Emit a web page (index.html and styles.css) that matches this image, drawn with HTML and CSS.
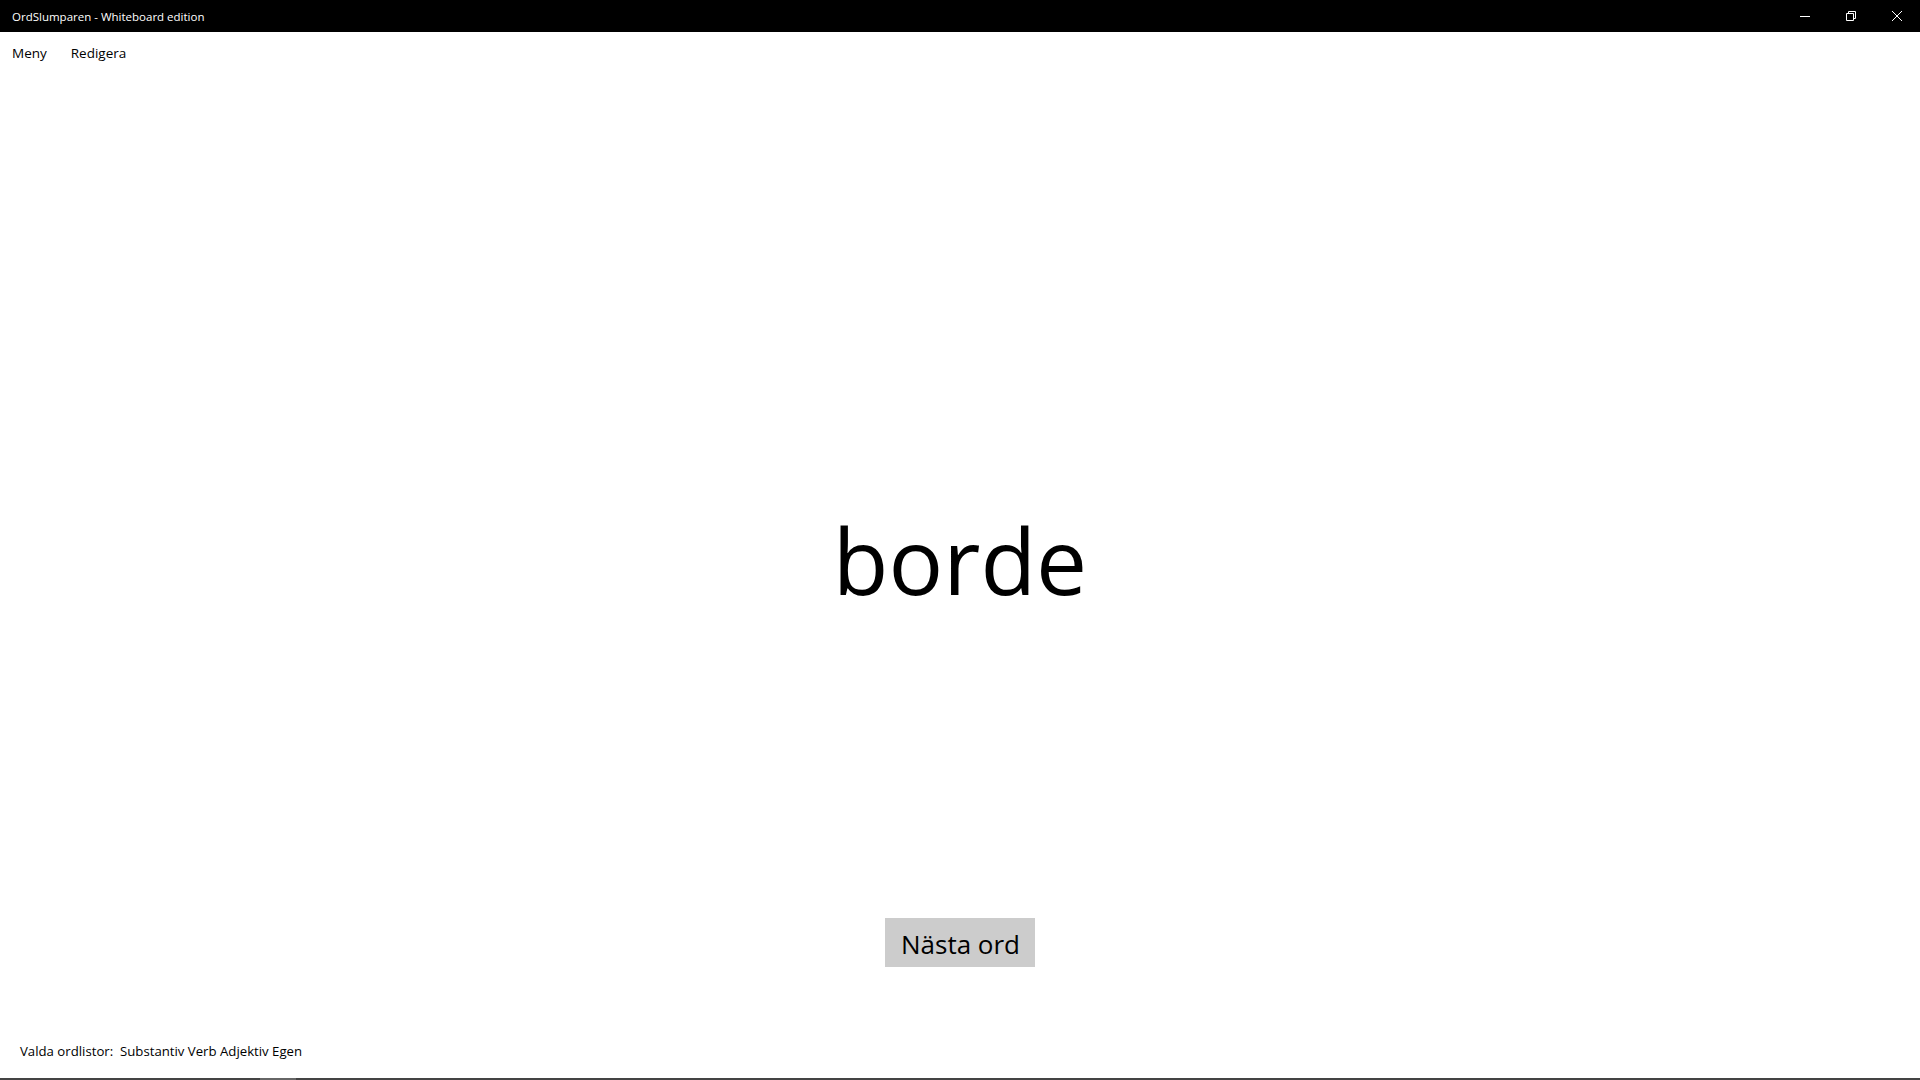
FILE: index.html
```html
<!DOCTYPE html>
<html lang="sv">
<head>
<meta charset="utf-8">
<title>OrdSlumparen - Whiteboard edition</title>
<link rel="stylesheet" href="styles.css">
</head>
<body>
<div class="window">
  <header class="titlebar">
    <span class="title">OrdSlumparen - Whiteboard edition</span>
    <div class="controls">
      <span class="ctl"><svg width="10" height="10" viewBox="0 0 10 10"><path d="M0 5.5H10" stroke="#fff" stroke-width="1"/></svg></span>
      <span class="ctl"><svg width="10" height="10" viewBox="0 0 10 10"><path d="M0.5 2.5H7.5V9.5H0.5Z M2.5 2.5V0.5H9.5V7.5H7.5" stroke="#fff" stroke-width="1" fill="none"/></svg></span>
      <span class="ctl"><svg width="10" height="10" viewBox="0 0 10 10"><path d="M0 0L10 10M10 0L0 10" stroke="#fff" stroke-width="1"/></svg></span>
    </div>
  </header>
  <nav class="menubar">
    <span class="menu-item">Meny</span>
    <span class="menu-item">Redigera</span>
  </nav>
  <main class="stage">
    <div class="word">borde</div>
    <button class="next">Nästa ord</button>
  </main>
  <footer class="status">Valda ordlistor:&nbsp; Substantiv Verb Adjektiv Egen</footer>
  <div class="edge"><span class="edge-thumb"></span></div>
</div>
</body>
</html>
```
FILE: styles.css
```css
html, body {
  margin: 0;
  padding: 0;
  background: #fff;
}
body {
  font-family: "Segoe UI", "Open Sans", "Noto Sans", sans-serif;
  color: #000;
}
.window {
  width: 1920px;
  height: 1080px;
  display: flex;
  flex-direction: column;
  overflow: hidden;
}
.titlebar {
  height: 32px;
  background: #000;
  color: #fff;
  display: flex;
  align-items: center;
  justify-content: space-between;
  flex: none;
}
.title {
  font-size: 11.5px;
  padding-left: 12px;
}
.controls {
  display: flex;
  height: 100%;
}
.ctl {
  width: 46px;
  height: 32px;
  display: flex;
  align-items: center;
  justify-content: center;
}
.ctl svg { display: block; }
.menubar {
  height: 40px;
  box-sizing: border-box;
  padding-top: 2px;
  display: flex;
  align-items: center;
  gap: 24px;
  padding-left: 12px;
  font-size: 13.5px;
  flex: none;
}
.stage {
  flex: 1;
  display: flex;
  flex-direction: column;
  align-items: center;
}
.word {
  font-size: 91px;
  line-height: 128px;
  margin-top: 424px;
}
.next {
  margin-top: 294px;
  width: 150px;
  height: 49px;
  border: none;
  background: #ccc;
  font-family: inherit;
  font-size: 26px;
  color: #000;
  padding: 3px 0 0 1px;
  line-height: 46px;
  box-sizing: border-box;
}
.status {
  height: 42px;
  box-sizing: border-box;
  padding-top: 6px;
  font-size: 13.2px;
  padding-left: 20px;
  flex: none;
  line-height: 18px;
}
.edge {
  height: 2px;
  background: #444;
  flex: none;
  display: flex;
  padding-left: 260px;
}
.edge-thumb {
  width: 36px;
  background: #666;
}
```
